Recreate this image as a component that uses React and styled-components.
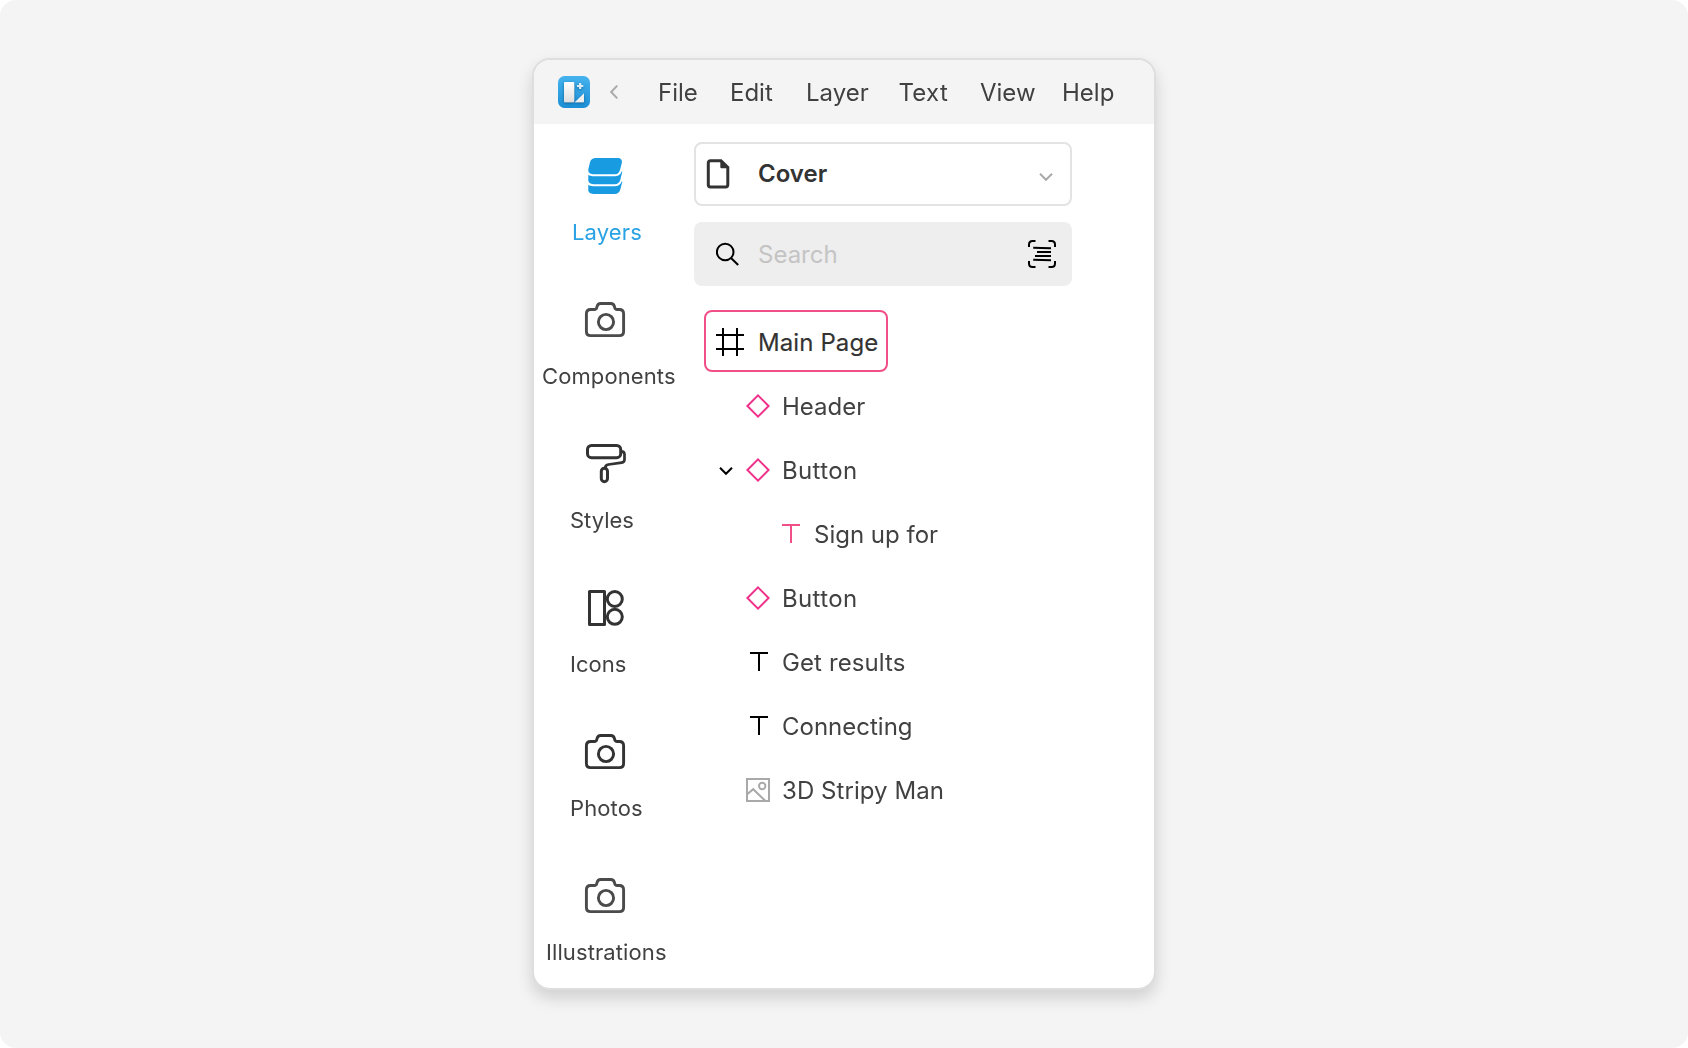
import React from "react";
import styled, { createGlobalStyle, css } from "styled-components";

const GlobalStyle = createGlobalStyle`
  *, *::before, *::after { box-sizing: border-box; }
  body { margin: 0; background: #fff; }
`;

const softText = css`
  font-weight: 400;
  opacity: 0.93;
`;

const Page = styled.main`
  display: flex;
  justify-content: center;
  align-items: flex-start;
  height: 1048px;
  padding-top: 58px;
  border-radius: 16px;
  background: #f4f4f4;
  color: #333;
  font-family: Inter, "Liberation Sans", sans-serif;
  font-size: 24px;
  line-height: 32px;
  overflow: hidden;
`;

const Window = styled.section`
  display: flex;
  flex-direction: column;
  width: 624px;
  height: 932px;
  border: 2px solid #dedede;
  border-radius: 18px;
  background: #fff;
  background-clip: padding-box;
  box-shadow: 0 8px 16px rgba(0, 0, 0, 0.15);
  overflow: hidden;
`;

const MenuBar = styled.header`
  display: flex;
  align-items: center;
  flex: none;
  height: 64px;
  padding-left: 24px;
  background: #f4f4f4;
`;

const BackButton = styled.button`
  display: flex;
  width: 8px;
  margin: 0 40px 0 20px;
  padding: 0;
  border: 0;
  background: none;
`;

const Menu = styled.nav`
  display: flex;
  padding-top: 2px;
`;

const MenuItem = styled.a`
  ${softText}
  width: ${(p) => p.$width}px;
  letter-spacing: ${(p) => p.$tracking || 0}px;
  white-space: nowrap;
`;

const Body = styled.div`
  display: flex;
  flex: 1;
`;

const Rail = styled.nav`
  display: flex;
  flex-direction: column;
  flex: none;
  width: 160px;
  padding-top: 28px;
`;

const RailItem = styled.a`
  display: flex;
  flex-direction: column;
  gap: 22px;
  height: 144px;
  color: ${(p) => (p.$active ? "#199be2" : "#333")};
  font-size: 22px;
  line-height: 28px;
`;

const RailIcon = styled.span`
  display: flex;
  margin-left: 50px;
  color: ${(p) => p.$tone || "inherit"};
`;

const RailLabel = styled.span`
  ${softText}
  padding-left: ${(p) => p.$indent}px;
  letter-spacing: ${(p) => p.$tracking || 0}px;
  white-space: nowrap;
`;

const Panel = styled.div`
  display: flex;
  flex-direction: column;
  width: 378px;
  padding-top: 18px;
`;

const PageSelect = styled.div`
  display: flex;
  align-items: center;
  height: 64px;
  padding: 0 17px 0 10px;
  border: 2px solid #e3e3e3;
  border-radius: 8px;
`;

const PageName = styled.strong`
  flex: 1;
  margin-left: 28px;
  font-weight: 600;
`;

const Chevron = styled.span`
  display: flex;
  padding-top: 6px;
`;

const SearchBox = styled.label`
  display: flex;
  align-items: center;
  height: 64px;
  margin-top: 16px;
  padding: 0 16px 0 22px;
  border-radius: 8px;
  background: #eee;
`;

const Placeholder = styled.span`
  flex: 1;
  padding: 1px 0 0 18px;
  color: #c4c4c4;
`;

const Tree = styled.ul`
  display: flex;
  flex-direction: column;
  margin: 24px 0 0;
  padding: 0;
  list-style: none;
`;

const RootRow = styled.li`
  display: flex;
  align-items: center;
  gap: 14px;
  width: 184px;
  height: 62px;
  margin: 0 0 2px 10px;
  padding: 2px 0 0 10px;
  border: 2px solid #f04f88;
  border-radius: 8px;
  letter-spacing: 0.1px;
  white-space: nowrap;
`;

const RootLabel = styled.span`
  padding-top: 1px;
  -webkit-text-stroke: 0.15px currentColor;
`;

const Row = styled.li`
  display: flex;
  align-items: center;
  height: 64px;
  padding-left: ${(p) => (p.$depth === 2 ? 56 : 24)}px;
`;

const Toggle = styled.span`
  display: flex;
  width: 28px;
  padding: 2px 0 0 1px;
`;

const RowIcon = styled.span`
  display: flex;
  width: 24px;
`;

const RowLabel = styled.span`
  ${softText}
  padding-top: 2px;
  margin-left: 12px;
  letter-spacing: ${(p) => p.$tracking || 0}px;
  white-space: nowrap;
`;

const Logo = () => (
  <svg width="32" height="32" viewBox="0 0 32 32">
    <defs>
      <linearGradient id="tile" x1="0" y1="0" x2="0" y2="1">
        <stop offset="0" stopColor="#45b3ee" />
        <stop offset="1" stopColor="#1c8fd6" />
      </linearGradient>
      <linearGradient id="paper" x1="0" y1="0" x2="0" y2="1">
        <stop offset="0" stopColor="#fff" />
        <stop offset="1" stopColor="#dedede" />
      </linearGradient>
      <filter id="drop" x="-30%" y="-30%" width="160%" height="160%">
        <feDropShadow dx="0" dy="1" stdDeviation="1.4" floodColor="#07507f" floodOpacity="0.75" />
      </filter>
    </defs>
    <rect width="32" height="32" rx="6.5" fill="url(#tile)" />
    <g filter="url(#drop)">
      <path d="M26 17.2V25.4a.8.8 0 0 1-.8.8H16.8z" fill="#eee" />
      <rect x="6" y="6" width="10.2" height="20.2" rx="0.8" fill="url(#paper)" />
      <path d="M21 7h2.200v2H25.200v2H23.200v2H21v-2H19V9h2z" fill="#d9eaf5" />
    </g>
  </svg>
);

const LayersIcon = () => (
  <svg width="44" height="44" viewBox="0 0 44 44" fill="currentColor">
    <path d="M12 6H33.500c3.200 0 5.100 2 4.300 5L36.200 17.200c-.9 3.600-2.400 5-5.200 5H9c-3.200 0-5.200-2.200-4.600-5.200L6 10.200C6.900 7.200 8.800 6 12 6z" />
    <path d="M4.300 22.800c1.300 1 2.700 1.400 4.500 1.400h22c3.600 0 5.700-1.500 7-5l.5.600-2 8c-.8 3-2.600 4.400-5.600 4.400H9.500c-3.500 0-5.700-2-5.200-5.400z" />
    <path d="M4.300 32.800c1.300 1 2.700 1.400 4.500 1.400h22c3.600 0 5.700-1.500 7-5l.5.600-2 7.800c-.8 3-2.600 4.400-5.600 4.400H9.500c-3.500 0-5.700-2-5.200-5.200z" />
  </svg>
);

const CameraIcon = () => (
  <svg width="44" height="44" viewBox="0 0 44 44" fill="none" stroke="currentColor" strokeWidth="2.900">
    <g transform="translate(0 4)">
      <path d="M6.600 9.500h3.700c1.500 0 2.200-.6 2.500-2l.3-1.200c.5-1.900 1.600-2.800 3.500-2.800h10.300c1.900 0 3 .9 3.500 2.800l.3 1.200c.3 1.400 1 2 2.500 2h2.200c2.700 0 4.200 1.600 4.200 4.200v17.700c0 2.600-1.500 4.200-4.200 4.200H6.600c-2.700 0-4.200-1.600-4.200-4.200V13.700c0-2.600 1.500-4.200 4.200-4.200z" />
      <circle cx="22" cy="22" r="7.600" />
    </g>
  </svg>
);

const RollerIcon = () => (
  <svg width="44" height="44" viewBox="0 0 44 44" fill="none" stroke="currentColor" strokeWidth="3">
    <rect x="3.500" y="5.500" width="33.200" height="12.200" rx="4" />
    <path d="M37 11.300c2.600 0 3.500 1 3.500 3v5.200c0 1.900-.9 2.800-2.800 3.100l-13.200 1.900c-2.500.4-3.300 1.400-3.300 3.500" strokeWidth="2.700" />
    <rect x="17.300" y="28.200" width="6.200" height="13.500" rx="3.100" />
  </svg>
);

const ShapesIcon = () => (
  <svg width="44" height="44" viewBox="0 0 44 44" fill="none" stroke="currentColor" strokeWidth="3" strokeLinejoin="round">
    <rect x="5.500" y="7.500" width="15" height="33" />
    <circle cx="30.800" cy="15" r="7.500" />
    <circle cx="30.800" cy="32.800" r="7.500" />
  </svg>
);

const BackIcon = () => (
  <svg width="8" height="14" viewBox="0 0 8 14" fill="none" stroke="#ababab" strokeWidth="2">
    <path d="M7.300.6 1.200 7l6.100 6.400" />
  </svg>
);

const ChevronDown = ({ color }) => (
  <svg width="14" height="10" viewBox="0 0 14 10" fill="none" stroke={color} strokeWidth="2">
    <path d="M1 1.800 7 7.800l6-6" />
  </svg>
);

const FileIcon = () => (
  <svg width="24" height="32" viewBox="0 0 24 32" fill="none" stroke="#333" strokeWidth="3">
    <path d="M4.500 2.800h10.500L21.800 9.300v17.500c0 1.400-.8 2.200-2.200 2.200H4.500c-1.400 0-2.200-.8-2.200-2.200V5c0-1.400.8-2.200 2.200-2.200z" />
    <path d="M14.300 2.300v6.500c0 1 .5 1.500 1.500 1.500H22.300z" fill="#333" stroke="none" />
  </svg>
);

const SearchIcon = () => (
  <svg width="24" height="24" viewBox="0 0 24 24" fill="none" stroke="#000" strokeWidth="2">
    <circle cx="9.200" cy="10" r="8.300" />
    <path d="m15 16 7.200 7" />
  </svg>
);

const ScanTextIcon = () => (
  <svg width="28" height="28" viewBox="0 0 28 28" fill="none" stroke="#000" strokeWidth="2">
    <path d="M1 7V4.500C1 2 2 1 4.500 1H7.500M20.500 1h3C26 1 27 2 27 4.500V7M27 21v2.500c0 2.500-1 3.500-3.500 3.500h-3M7.500 27h-3C2 27 1 26 1 23.500V21" />
    <path d="m5.200 7.800 17.800.4M9 12h14M7 16h16M5.200 19.800l17.800.4" />
  </svg>
);

const FrameIcon = () => (
  <svg width="28" height="28" viewBox="0 0 28 28" stroke="#000" strokeWidth="2">
    <path d="M7 0v28M21 0v28M0 7h28M0 21h28" />
  </svg>
);

const DiamondIcon = () => (
  <svg width="24" height="24" viewBox="0 0 24 24" fill="none" stroke="#f0318a" strokeWidth="2">
    <path d="M12 1.400 22.600 12 12 22.600 1.400 12z" />
  </svg>
);

const TypeIcon = ({ color }) => (
  <svg width="24" height="24" viewBox="0 0 24 24" stroke={color} strokeWidth="2">
    <path d="M4 3h18M13 3v18" />
  </svg>
);

const ImageIcon = () => (
  <svg width="24" height="24" viewBox="0 0 24 24" fill="none" stroke="#a9a9a9" strokeWidth="2">
    <rect x="1" y="1" width="22" height="22" />
    <circle cx="16.200" cy="8" r="3.200" />
    <path d="M1.500 16 7.200 11.200 19 22.500" />
  </svg>
);

const menu = [
  { label: "File", width: 72 },
  { label: "Edit", width: 76 },
  { label: "Layer", width: 92.5 },
  { label: "Text", width: 81.5, tracking: 0.25 },
  { label: "View", width: 82 },
  { label: "Help", width: 56 },
];

const rail = [
  { label: "Layers", icon: LayersIcon, indent: 38, active: true, tracking: 0.15 },
  { label: "Components", icon: CameraIcon, indent: 8, tone: "#4b4b4b", tracking: 0.1 },
  { label: "Styles", icon: RollerIcon, indent: 36 },
  { label: "Icons", icon: ShapesIcon, indent: 36 },
  { label: "Photos", icon: CameraIcon, indent: 36, tracking: 0.1 },
  { label: "Illustrations", icon: CameraIcon, indent: 12, tone: "#4b4b4b", tracking: 0.1 },
];

const pink = "#f04f88";

const layers = [
  { label: "Header", icon: <DiamondIcon /> },
  { label: "Button", icon: <DiamondIcon />, open: true, tracking: 0.35 },
  { label: "Sign up for", icon: <TypeIcon color={pink} />, depth: 2 },
  { label: "Button", icon: <DiamondIcon />, tracking: 0.35 },
  { label: "Get results", icon: <TypeIcon color="#000" />, tracking: 0.1 },
  { label: "Connecting", icon: <TypeIcon color="#000" /> },
  { label: "3D Stripy Man", icon: <ImageIcon />, tracking: 0.06 },
];

export default function App() {
  return (
    <>
      <GlobalStyle />
      <Page>
        <Window>
          <MenuBar>
            <Logo />
            <BackButton aria-label="Back">
              <BackIcon />
            </BackButton>
            <Menu>
              {menu.map((m) => (
                <MenuItem key={m.label} $width={m.width} $tracking={m.tracking}>
                  {m.label}
                </MenuItem>
              ))}
            </Menu>
          </MenuBar>
          <Body>
            <Rail>
              {rail.map(({ label, icon: Icon, indent, active, tone, tracking }) => (
                <RailItem key={label} $active={active}>
                  <RailIcon $tone={tone}>
                    <Icon />
                  </RailIcon>
                  <RailLabel $indent={indent} $tracking={tracking}>
                    {label}
                  </RailLabel>
                </RailItem>
              ))}
            </Rail>
            <Panel>
              <PageSelect>
                <FileIcon />
                <PageName>Cover</PageName>
                <Chevron>
                  <ChevronDown color="#aaa" />
                </Chevron>
              </PageSelect>
              <SearchBox>
                <SearchIcon />
                <Placeholder>Search</Placeholder>
                <ScanTextIcon />
              </SearchBox>
              <Tree>
                <RootRow>
                  <FrameIcon />
                  <RootLabel>Main Page</RootLabel>
                </RootRow>
                {layers.map((l, i) => (
                  <Row key={i} $depth={l.depth}>
                    <Toggle>{l.open && <ChevronDown color="#000" />}</Toggle>
                    <RowIcon>{l.icon}</RowIcon>
                    <RowLabel $tracking={l.tracking}>{l.label}</RowLabel>
                  </Row>
                ))}
              </Tree>
            </Panel>
          </Body>
        </Window>
      </Page>
    </>
  );
}
